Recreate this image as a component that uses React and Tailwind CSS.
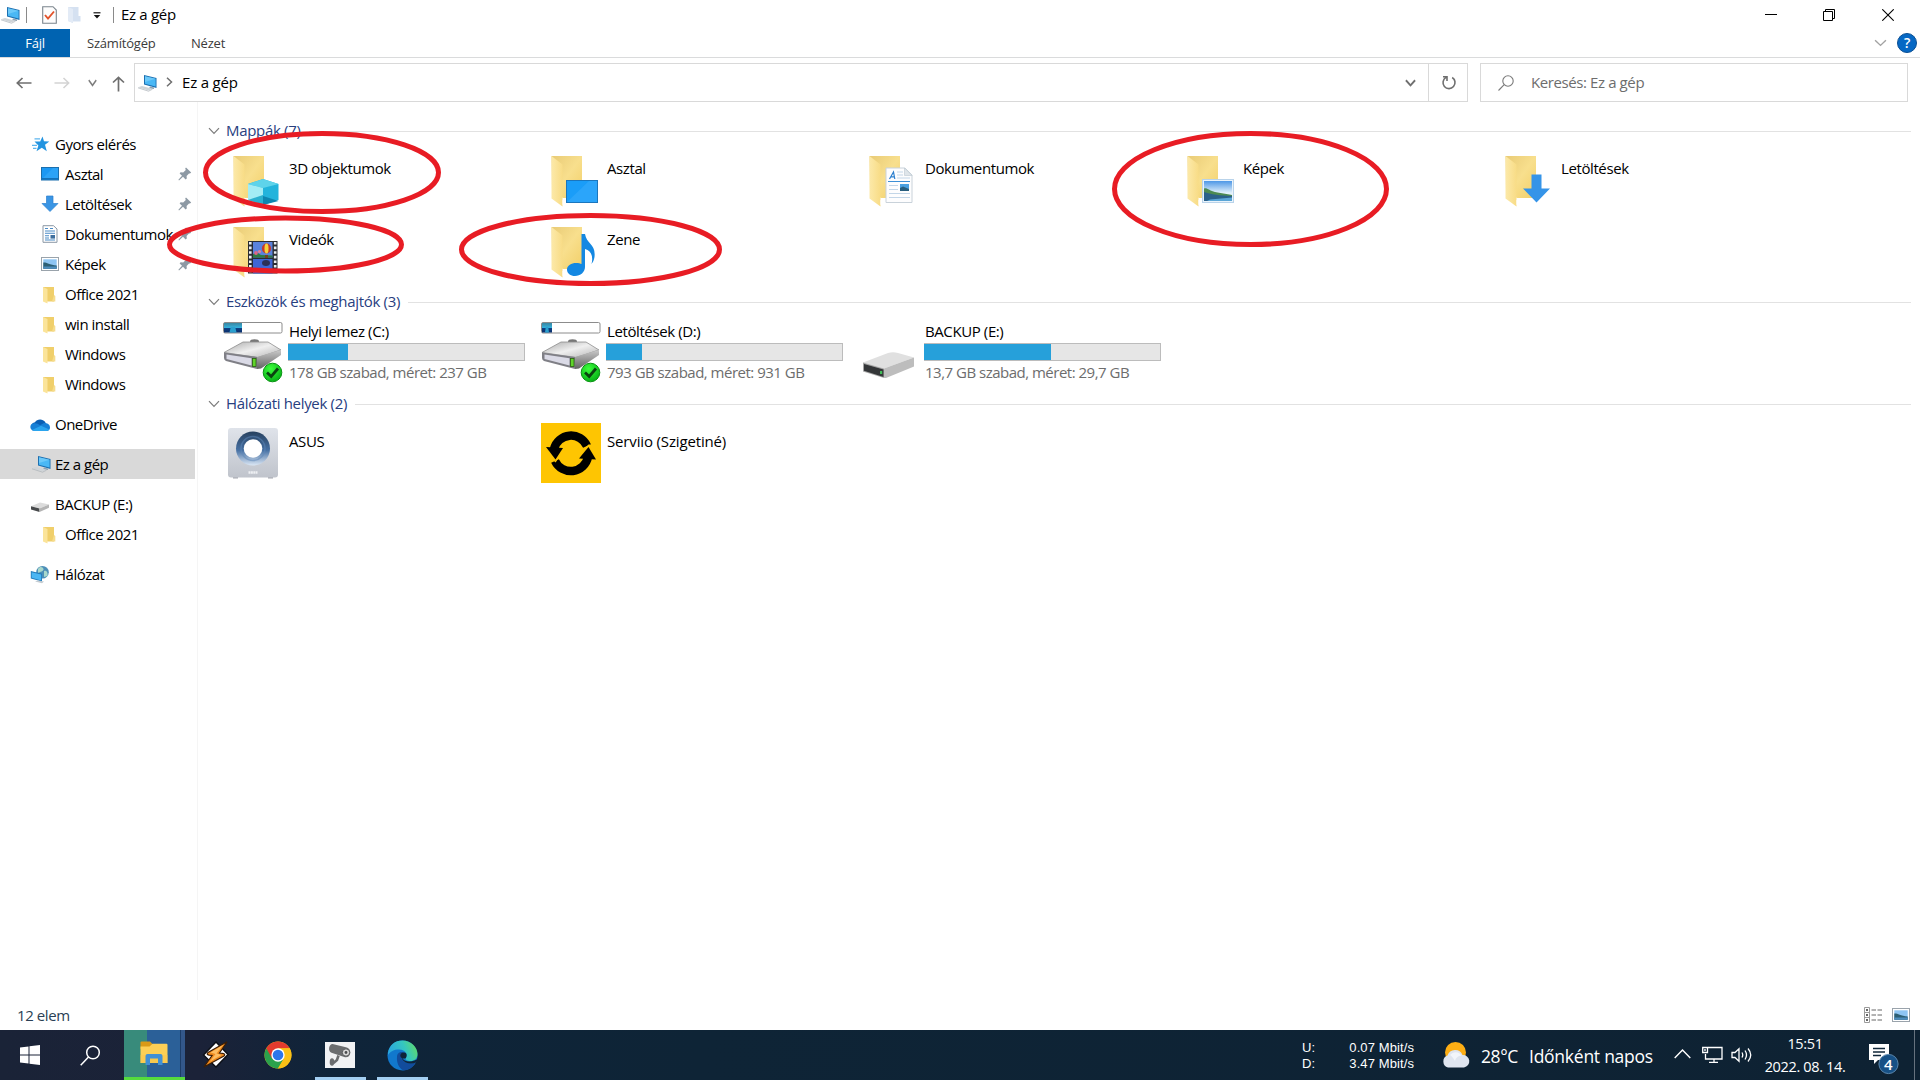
import React from "react";

/* ---------- small icons ---------- */

const Computer = ({ className = "" }) => (
  <svg width="22" height="20" viewBox="0 0 22 20" className={`shrink-0 ${className}`}>
    <path d="M8 2 L20.5 5 V15 L8 11.5 Z" fill="#1c6fb0" />
    <path d="M9 3.2 L19.6 5.8 V13.6 L9 10.8 Z" fill="#4ab8f5" />
    <path d="M9 3.2 L19.6 5.8 L9 9 Z" fill="#7bd0fb" opacity=".7" />
    <path d="M14 13.5 L18 14.6 V16 L13 15.4 Z" fill="#8fa3b3" />
    <path d="M2 14.2 L6 13 L16.5 15.8 L12.5 17.6 Z" fill="#cfd4d8" />
    <path d="M2 14.8 L12.5 18.2 L16.5 16.2" stroke="#aab2b8" strokeWidth=".7" fill="none" />
  </svg>
);

const MiniFolder = () => (
  <svg width="14" height="18" viewBox="0 0 14 18" className="shrink-0">
    <path d="M1 1 H12 V15.5 H6 L1 15 Z" fill="#f0cf6b" />
    <path d="M1 1 L5.5 3 V17.5 L1 15.5 Z" fill="#fbe49a" />
    <path d="M12 9 L13.3 10 V15.5 H10 Z" fill="#f6dc8c" />
  </svg>
);

const Star = () => (
  <svg width="18" height="16" viewBox="0 0 18 16" className="shrink-0">
    <path d="M10.500 .5 L12 5.200 L17.300 5.400 L13 8.800 L14.800 15.300 L9.800 11.800 L4.500 15.300 L6.400 9.400 L2.500 5.600 L8.200 5.400 Z" fill="#2394e0" />
    <path d="M2.500 2.800 H8 M0 9.400 H5 M1 12.300 H4.500" stroke="#5db5ee" strokeWidth="1.200" />
  </svg>
);

const MiniDesktop = () => (
  <svg width="18" height="14" viewBox="0 0 18 14" className="shrink-0">
    <rect x=".5" y=".5" width="17" height="12.5" fill="#1b98f3" stroke="#1a6fae" />
    <path d="M1 12 L12 1 H17 V12 Z" fill="#3badfa" opacity=".55" />
    <rect x="1" y="11" width="16" height="1.6" fill="#1471b8" />
  </svg>
);

const MiniDown = () => (
  <svg width="18" height="18" viewBox="0 0 18 18" className="shrink-0">
    <path d="M5.5 1 H12 V8.5 H17 L9 16.5 L1 8.5 H5.5 Z" fill="#3a95e4" stroke="#2b7fce" strokeWidth=".7" />
  </svg>
);

const MiniDoc = () => (
  <svg width="16" height="18" viewBox="0 0 16 18" className="shrink-0">
    <path d="M1 .7 H11.5 L15 4 V17.3 H1 Z" fill="#fff" stroke="#8b98a5" />
    <path d="M3 3.5 H6 M8 3.5 H11 M3 6 H13 M3 8.3 H13 M3 10.8 H7 M3 13 H7 M3 15 H13" stroke="#4a8bc6" strokeWidth="1.1" />
    <rect x="8.5" y="10" width="4.5" height="3.6" fill="#3e6f9e" />
  </svg>
);

const MiniPicture = () => (
  <svg width="18" height="14" viewBox="0 0 18 14" className="shrink-0">
    <rect x=".5" y=".5" width="17" height="13" fill="#fff" stroke="#9aa3ab" />
    <rect x="2.3" y="2.3" width="13.4" height="9.4" fill="#8ec5f3" />
    <path d="M2.3 5.5 C5 5 8 7.5 15.7 8.6 V11.7 H2.3 Z" fill="#2d5f74" />
    <path d="M2.3 9.5 H15.7 V11.7 H2.3 Z" fill="#4d8dbd" />
  </svg>
);

const Cloud = () => (
  <svg width="20" height="13" viewBox="0 0 20 13" className="shrink-0">
    <path d="M1 7.500 C2 5 4 4.500 5 4.300 A6 5.500 0 0 1 15.200 4 L16 6 L10 9 Z" fill="#0a5fb4" />
    <path d="M4.500 12.900 A4 4 0 0 1 1 6.800 C4 4.300 7.500 5.200 10 7.200 L14 5.100 C18 4.400 20 7 20 9.400 A3.400 3.400 0 0 1 16.600 12.900 Z" fill="#1780d6" />
    <path d="M2 12 L11 7.800 L19.300 11.500 A3.400 3.400 0 0 1 16.600 12.900 H4.500 Z" fill="#2ba5ee" />
  </svg>
);

const MiniDrive = () => (
  <svg width="20" height="12" viewBox="0 0 20 12" className="shrink-0">
    <path d="M1 5.2 L10 1.6 L19 3.6 L9.5 7.6 Z" fill="#dcdcdc" />
    <path d="M1 5.2 L9.5 7.6 V11 L1 8.6 Z" fill="#484a4c" />
    <path d="M9.5 7.6 L19 3.6 V6.8 L9.5 11 Z" fill="#b4b4b4" />
  </svg>
);

const MiniNetwork = () => (
  <svg width="20" height="19" viewBox="0 0 20 19" className="shrink-0">
    <circle cx="12.5" cy="7.2" r="6.300" fill="#4d8fb8" />
    <path d="M8 4 C10 1 13 2 13.5 4 S10 7 8 8 Z M14 6 C17 5 18 8 17.5 11 L14 12 Z" fill="#a9d8cb" />
    <path d="M.8 6 L12 8.8 V16.6 L.8 13.4 Z" fill="#1f78b8" />
    <path d="M1.600 7.200 L11.200 9.600 V15.400 L1.600 12.800 Z" fill="#4bb6f3" />
    <path d="M5 16.600 L12 18.300 L14 16.500 L8 15.600 Z" fill="#c3cbd1" />
  </svg>
);

const Pin = () => (
  <svg width="14" height="14" viewBox="0 0 14 14" className="shrink-0">
    <path d="M8 .6 L13.2 5.6 L12 6.6 L11 6.4 L8.6 9 L8.8 11.6 L7.6 12.4 L5 9.8 L1 13.4 L.4 12.8 L4 8.8 L1.6 6.4 L2.6 5.2 L5.2 5.4 L7.8 3 L7.2 1.6 Z" fill="#8d99a4" />
  </svg>
);

const Chevron = ({ w = 12, color = "#6b6b6b", sw = 1.4, className = "" }) => (
  <svg width={w} height="8" viewBox="0 0 12 8" preserveAspectRatio="none" className={`shrink-0 ${className}`}>
    <path d="M1 1.2 L6 6.4 L11 1.2" fill="none" stroke={color} strokeWidth={sw} />
  </svg>
);

/* ---------- large folder icons ---------- */

const Folder = ({ children }) => (
  <svg width="60" height="60" viewBox="0 0 60 60" className="shrink-0">
    <defs>
      <linearGradient id="fb" x1="0" x2="1" y1="0" y2="1">
        <stop offset="0" stopColor="#e9cb76" />
        <stop offset=".5" stopColor="#f8df8d" />
        <stop offset="1" stopColor="#f2cf68" />
      </linearGradient>
      <linearGradient id="ff" x1="0" x2="1">
        <stop offset="0" stopColor="#fce9a9" />
        <stop offset="1" stopColor="#f8dc86" />
      </linearGradient>
    </defs>
    <path d="M10.500 5 H41 V47 H22 L11 40 Z" fill="url(#fb)" />
    <path d="M10.500 5 L21.500 13.500 V55.500 L10.500 47.500 Z" fill="url(#ff)" />
    <path d="M21.500 49 L24 47.500 V52 L21.500 54 Z" fill="#fff" />
    {children}
  </svg>
);

const Cube = () => (
  <g>
    <path d="M25 33 L40 28 L55.5 33 V49 L40 54 L25 49 Z" fill="#22b4dc" />
    <path d="M25 33 L40 28 L55.5 33 L40 37 Z" fill="#5ed3ea" />
    <path d="M25 33 L40 37 V53 L25 49 Z" fill="#a3ecf4" />
    <path d="M25 49 L40 44 V53.5 Z" fill="#2bb0cf" />
    <path d="M40 45 L55.5 50 L40 54 Z" fill="#0d86b0" />
  </g>
);
const Screen = () => (
  <g>
    <rect x="25.5" y="29.5" width="31" height="22" fill="#1a9df8" stroke="#1b76bd" />
    <path d="M26 51 L48 30 H56 V51 Z" fill="#3caefb" opacity=".5" />
  </g>
);
const Sheet = () => (
  <g>
    <path d="M27 17 H46 L53 24 V51.5 H27 Z" fill="#fdfdfe" stroke="#c9d2da" />
    <path d="M45.5 17 V24.5 H53 Z" fill="#dfe5ea" stroke="#bcc7d0" strokeWidth=".6" />
    <path d="M29 30.5 H51" stroke="#3c8fd6" strokeWidth="1" />
    <path d="M30.5 28 L34.5 21 L35.8 28 M32 25.8 H35.6" stroke="#2b7fce" strokeWidth="1.2" fill="none" />
    <path d="M38 21 H44 M38 24 H44 M38 27 H51 M30 34.5 H39 M30 38.5 H39 M30 42.5 H51 M30 46.5 H51" stroke="#c3d6e8" />
    <rect x="41" y="33" width="9" height="7" fill="#4aa0e0" />
    <path d="M41 37 L44 35.5 L50 38 V40 H41 Z" fill="#285e7e" />
  </g>
);
const Photo = () => (
  <g>
    <defs>
      <linearGradient id="sky" x1="0" x2="0" y1="0" y2="1">
        <stop offset="0" stopColor="#4e97e6" />
        <stop offset=".6" stopColor="#e3f1fb" />
      </linearGradient>
    </defs>
    <rect x="25.500" y="28.500" width="31" height="23" fill="#e9f3fb" stroke="#b9d3ea" />
    <rect x="27" y="30" width="28" height="20" fill="url(#sky)" />
    <path d="M27 37.500 C30 36.500 33 40 38 41 S50 43 55 44 V46 H27 Z" fill="#4c8a52" />
    <path d="M27 41 C33 43.500 44 44.500 55 45 V50 H27 Z" fill="#2b618a" />
    <path d="M33 48.500 L55 46.500 V50 H30 Z" fill="#5aa5d6" />
  </g>
);
const Down = () => (
  <path d="M36.500 23.500 H46.500 V37.500 H55 L41.500 51.500 L28 37.500 H36.500 Z" fill="#3594e8" />
);
const Film = () => (
  <g>
    <rect x="25" y="19" width="29.500" height="32.500" fill="#2a2c33" />
    <rect x="30" y="20" width="19.500" height="15.500" fill="#5a82dc" />
    <rect x="30" y="37" width="19.500" height="14.500" fill="#3f66d6" />
    <path d="M30 32 L34 30.500 L38 33 L49.500 33.500 V35.500 H30 Z" fill="#2d7a43" />
    <circle cx="33" cy="31" r="1.900" fill="#dc6688" />
    <circle cx="36.500" cy="29.500" r="1.600" fill="#e27f96" />
    <ellipse cx="43.500" cy="26.500" rx="4.600" ry="5" fill="#c73a2b" />
    <ellipse cx="43.500" cy="26.500" rx="2" ry="5" fill="#f7d33b" />
    <path d="M42 33 H45 V36 H42 Z" fill="#71401f" />
    <ellipse cx="43" cy="41" rx="4" ry="3" fill="#2c3056" />
    <path d="M27.300 20 V51 M52.200 20 V51" stroke="#eceff2" strokeWidth="2.600" strokeDasharray="2.600 2" />
  </g>
);
const Note = () => (
  <path d="M40.500 12 L44 12 C45.500 22 55 22 53.500 35 C53 38 52 40 50.500 42 C52.500 34 50 28.500 44 27 V45 C44 50 39.500 54 34 54 C29.500 54 26 51.500 26 47.500 C26 43.500 30.500 41 35 41 C37.500 41 39.500 41.500 40.500 42 Z" fill="#1488e2" />
);

/* ---------- drive and device icons ---------- */

const HardDrive = ({ used }) => (
  <svg width="60" height="62" viewBox="0 0 60 62" className="shrink-0">
    <defs>
      <linearGradient id="ht" x1="0" x2="1" y1="0" y2="1">
        <stop offset="0" stopColor="#a9a9a9" />
        <stop offset=".5" stopColor="#efefef" />
        <stop offset="1" stopColor="#b4b4b4" />
      </linearGradient>
      <linearGradient id="hs" x1="0" x2="0" y1="0" y2="1">
        <stop offset="0" stopColor="#c9c9c9" />
        <stop offset="1" stopColor="#636363" />
      </linearGradient>
      <linearGradient id="hu" x1="0" x2="0" y1="0" y2="1">
        <stop offset="0" stopColor="#3a86a0" />
        <stop offset=".5" stopColor="#35b2de" />
        <stop offset=".58" stopColor="#0c3e80" />
        <stop offset="1" stopColor="#0b2f6c" />
      </linearGradient>
      <radialGradient id="hg" cx=".4" cy=".3" r=".8">
        <stop offset="0" stopColor="#3cff3c" />
        <stop offset="1" stopColor="#00a812" />
      </radialGradient>
    </defs>
    <rect x=".5" y="1.500" width="58.500" height="10.500" rx="1.500" fill="#fff" stroke="#8c8c8c" />
    <rect x="1" y="2" width={used} height="9.500" fill="url(#hu)" />
    <path d={`M${1 + used * 0.3} 11.500 L${1 + used * 0.38} 6 H${1 + used * 0.62} L${1 + used * 0.7} 11.500 Z`} fill="#2a9fce" />
    <ellipse cx="31.500" cy="20.500" rx="4.500" ry="2.300" fill="#777" />
    <path d="M1 31.500 L20 21 H45 L58 29 L35 36.500 Z" fill="url(#ht)" stroke="#8d8d8d" strokeWidth=".8" />
    <path d="M1 31.500 L34 36 V48 L3 40 Q1 39 1 37 Z" fill="#7f7f86" />
    <path d="M3.500 33.500 L28.500 37.200 V44.500 L3.500 38 Z" fill="#dadae6" />
    <path d="M34 36 L58 29 V34 L38 47.500 L34 48 Z" fill="url(#hs)" />
    <rect x="29.500" y="37.500" width="3.500" height="8" fill="#5fd42a" stroke="#2a6110" strokeWidth=".8" />
    <circle cx="49.500" cy="51.500" r="9.300" fill="url(#hg)" stroke="#06930f" strokeWidth="1" />
    <path d="M44 51.500 L48.200 55.500 L55 47.500" fill="none" stroke="#0a4310" strokeWidth="2.800" />
  </svg>
);

const Removable = () => (
  <svg width="60" height="60" viewBox="1 0 60 60" className="shrink-0">
    <path d="M5 41.500 L30 32 Q35 30.500 40 32 L56 36.500 L26 47.500 Z" fill="#e0e0e0" />
    <path d="M5 41.500 L26 47.500 V57 L5 50.500 Z" fill="#a6a6a6" />
    <path d="M6 43 L25.500 48.600 V56 L6 49.800 Z" fill="#343638" />
    <path d="M26 47.500 L56 36.500 V45.500 L28 57 H26 Z" fill="#bdbdbd" />
    <rect x="22" y="50" width="2.200" height="3" fill="#42bd58" />
  </svg>
);

const Camera = () => (
  <svg width="60" height="60" viewBox="0 0 60 60" className="shrink-0">
    <defs>
      <linearGradient id="cb" x1="0" x2="0" y1="0" y2="1">
        <stop offset="0" stopColor="#dfe3ea" />
        <stop offset="1" stopColor="#c0c4cc" />
      </linearGradient>
      <linearGradient id="cr" x1="0" x2="0" y1="0" y2="1">
        <stop offset="0" stopColor="#27415f" />
        <stop offset=".55" stopColor="#4670a3" />
        <stop offset="1" stopColor="#dbe7f5" />
      </linearGradient>
    </defs>
    <rect x="10" y="53" width="5" height="2.500" fill="#a5a8af" />
    <rect x="45" y="53" width="5" height="2.500" fill="#a5a8af" />
    <rect x="5" y="5" width="50" height="49.500" rx="3" fill="url(#cb)" />
    <circle cx="30" cy="25.500" r="17" fill="url(#cr)" />
    <circle cx="30" cy="25.500" r="12" fill="none" stroke="#5d88ba" strokeWidth="1.500" opacity=".5" />
    <circle cx="30" cy="25.500" r="9.300" fill="#fff" />
    <path d="M25.500 49.500 H34.500" stroke="#eef0f3" strokeWidth="2.500" strokeDasharray="2 .4" />
  </svg>
);

const Serviio = () => (
  <svg width="60" height="60" viewBox="0 0 60 60" className="shrink-0">
    <rect width="60" height="60" fill="#fec502" />
    <path d="M13 26 A17.500 17.500 0 0 1 46 23" fill="none" stroke="#000" strokeWidth="8.500" />
    <path d="M47 34 A17.500 17.500 0 0 1 14 38" fill="none" stroke="#000" strokeWidth="8.500" />
    <path d="M5 24 L22 25 L14.500 36.500 Z" fill="#000" />
    <path d="M55 36.500 L38 35.500 L47.500 24 Z" fill="#000" />
    <path d="M8.500 33 L14.500 38.500 L19 32 M41.500 28 L48 22 L51.500 28" fill="none" stroke="#fec502" strokeWidth="1.300" />
  </svg>
);

/* ---------- explorer pieces ---------- */

const NavRow = ({ icon, label, nested, pin, selected }) => (
  <div className={`flex h-[30px] w-[195px] items-center ${nested ? "pl-[41px]" : "pl-[30px]"} ${selected ? "bg-[#d9d9d9]" : ""}`}>
    <span className={`flex shrink-0 items-center ${nested ? "w-[24px]" : "w-[25px]"}`}>{icon}</span>
    <span className="w-[113px] whitespace-nowrap tracking-[-0.500px]">{label}</span>
    {pin && <Pin />}
  </div>
);

const NestedFolder = ({ label }) => (
  <NavRow nested icon={<span className="pl-px pt-px"><MiniFolder /></span>} label={label} />
);

const Section = ({ title, children, className = "" }) => (
  <section className={className}>
    <div className="flex h-[22px] items-center pr-[9px] text-[#28407f]">
      <Chevron w={12} color="#7b7b7b" sw={1.2} className="mr-[6px]" />
      <h2 className="-mt-[2px] whitespace-nowrap tracking-[-0.320px]">{title}</h2>
      <span className="ml-2 mt-px h-px flex-1 bg-[#e2e2e2]" />
    </div>
    {children}
  </section>
);

const Tile = ({ icon, label, labelClass = "mt-[7px]" }) => (
  <div className="flex h-[71px] w-[318px]">
    {icon}
    <span className={`ml-[6px] whitespace-nowrap ${labelClass}`}>{label}</span>
  </div>
);

const Drive = ({ icon, name, info, percent }) => (
  <div className="flex w-[318px]">
    {icon}
    <div className="ml-[5px] flex w-[237px] flex-col">
      <span className="h-[22px] pl-px leading-[20px]">{name}</span>
      <div className="h-[18px] border border-[#bcbcbc] bg-[#e6e6e6]">
        <div className="-ml-px h-full bg-[#26a0da]" style={{ width: `${percent}%` }} />
      </div>
      <span className="mt-px whitespace-nowrap pl-px leading-[20px] tracking-[-0.500px] text-[#6d6d6d]">{info}</span>
    </div>
  </div>
);

const folders = [
  ["3D objektumok", <Cube />],
  ["Asztal", <Screen />],
  ["Dokumentumok", <Sheet />],
  ["Képek", <Photo />],
  ["Letöltések", <Down />],
  ["Videók", <Film />],
  ["Zene", <Note />],
];

/* Hand-drawn red markers lying over the window */
const Markers = () => (
  <svg width="1920" height="300" className="pointer-events-none absolute left-0 top-0" fill="none" stroke="#e81c24" strokeWidth="5">
    <ellipse cx="322" cy="172.500" rx="116.500" ry="39" />
    <ellipse cx="285.500" cy="244.500" rx="116" ry="26.500" />
    <ellipse cx="590.500" cy="249.500" rx="129" ry="34" />
    <ellipse cx="1250.500" cy="189" rx="136" ry="55.500" />
  </svg>
);

/* ---------- taskbar ---------- */

const Taskbar = () => (
  <footer className="flex h-[50px] shrink-0 bg-[linear-gradient(90deg,#1a2337_0px,#1b2238_200px,#0f2439_330px,#0e2436_700px,#0e2233_1920px)] text-white">
    <div className="flex w-[60px] items-center justify-center">
      <svg width="20" height="20" viewBox="0 0 20 20" fill="#fff">
        <path d="M0 2.600 L8.500 1.400 V9.500 H0 Z M9.500 1.200 L20 0 V9.500 H9.500 Z M0 10.500 H8.500 V18.600 L0 17.400 Z M9.500 10.500 H20 V20 L9.500 18.800 Z" />
      </svg>
    </div>
    <div className="flex w-[64px] items-center pl-5">
      <svg width="21" height="21" viewBox="0 0 21 21" fill="none" stroke="#fff" strokeWidth="1.500">
        <circle cx="13" cy="7.500" r="6.300" />
        <path d="M8.500 12 L.7 20.300" />
      </svg>
    </div>
    <div className="flex h-[50px] w-[61px] items-center justify-center border-b-[3px] border-[#55dc3d] bg-[linear-gradient(90deg,#388b7b_23px,#2b6098_23px,#2b6098_56px,#1c3d68_56px,#1c3d68_57px,#33578a_57px)]">
      <svg width="28" height="25" viewBox="0 0 28 25" className="-ml-px">
        <path d="M.5 1.500 Q.5 .5 1.500 .5 H10 L13 3.500 V8 H.5 Z" fill="#d99a17" />
        <path d="M.5 5.500 H9.500 L12.500 2.800 H26.500 Q27.500 2.800 27.500 4 V22 H.5 Z" fill="#fccf56" />
        <path d="M.5 14 H27.500 V22 H.5 Z" fill="#fbc64c" opacity=".6" />
        <path d="M5.500 24 V15 Q5.500 13 7.500 13 H20.500 Q22.500 13 22.500 15 V24 H18 V18 H10 V24 Z" fill="#4190d6" />
        <path d="M10 17.500 H18 V22 H10 Z" fill="#f7c84f" />
      </svg>
    </div>
    <div className="flex w-[62px] items-center justify-center">
      <svg width="27" height="27" viewBox="0 0 27 27" className="-ml-[2px] -mt-px">
        <path d="M14 1 L26 13.500 L14 26 L1.500 14 Z" fill="#fff" stroke="#0b0e15" strokeWidth="1.400" />
        <path d="M25 .8 L6 11.500 Q4 13.500 7 14.200 L10 14.500 L2 26 L22 15 Q24 13 20.500 12.300 L17.500 12 Z" fill="#f08b1f" stroke="#3b1d05" strokeWidth="1.200" />
        <path d="M21 4 L8.500 11.500 L13.500 13 L8 20.500 L19.500 13.900 L14.500 12.500 Z" fill="#fdbd62" />
      </svg>
    </div>
    <div className="flex w-[62px] items-center justify-center">
      <svg width="28" height="28" viewBox="0 0 28 28">
        <circle cx="14" cy="14" r="13.500" fill="#fbc116" />
        <path d="M14 14 L2.310 7.250 A13.500 13.500 0 0 0 14 27.500 L20 17.500 Z" fill="#2ba24c" />
        <path d="M2.310 7.250 A13.500 13.500 0 0 1 25.690 7.250 H14 L8 17.500 Z" fill="#e33b2e" />
        <path d="M25.690 7.250 A13.500 13.500 0 0 1 14 27.500 L19.800 17.400 L14 7.500 Z" fill="#fbc116" />
        <circle cx="14" cy="14" r="6.700" fill="#fff" />
        <circle cx="14" cy="14" r="5.300" fill="#2c76ea" />
      </svg>
    </div>
    <div className="flex w-[62px] justify-center">
      <div className="flex h-[50px] w-[51px] items-center justify-center border-b-[3px] border-[#a3cff2] pt-[3px]">
        <svg width="30" height="26" viewBox="0 0 30 26">
          <rect width="30" height="26" fill="#f1f2f4" />
          <path d="M7.500 2 L21 5.200 Q25.500 6.500 25.300 11 Q24.500 15.700 20 15.200 L6.500 10.700 Q3.500 9.500 4.200 5.500 Q5 2 7.500 2 Z" fill="#6b6d6f" />
          <circle cx="21" cy="10.500" r="3.700" fill="#d8d8d8" stroke="#55575a" />
          <circle cx="21" cy="10.500" r="1.400" fill="#4a4c4e" />
          <path d="M13.500 13.500 L12 18 L8.500 21" stroke="#6b6d6f" strokeWidth="2.600" fill="none" />
          <ellipse cx="7" cy="20" rx="2.300" ry="3.800" fill="#6b6d6f" />
        </svg>
      </div>
    </div>
    <div className="flex w-[62px] justify-center">
      <div className="flex h-[50px] w-[51px] items-center justify-center border-b-[3px] border-[#a3cff2] pt-[3px]">
        <svg width="31" height="31" viewBox="0 0 31 31">
          <defs>
            <linearGradient id="e1" x1="0" x2="1" y1=".3" y2="0">
              <stop offset="0" stopColor="#2ba9dd" />
              <stop offset=".5" stopColor="#35c6c0" />
              <stop offset="1" stopColor="#69de57" />
            </linearGradient>
          </defs>
          <circle cx="15.500" cy="15.500" r="15" fill="#1178cd" />
          <path d="M1 13 C2 5 8 .5 15.500 .5 C24 .5 30.500 7 30.500 14 C30.500 19 27 21 23.500 21 C20 21 18 19.500 18.500 18 C21 15.500 19 9.500 12 9.500 C7 9.500 3 11.500 1 15 Z" fill="url(#e1)" />
          <path d="M10 17 C10 12.500 14 11 17 12.500 C14 13.500 14 19 17 21.500 C20 24 26 23.500 28.500 22.500 C26 27.500 21 30.500 16.500 30.500 C11.500 28 9.500 22 10 17 Z" fill="#124c9c" />
          <path d="M18.500 18.500 C15 19 12.500 17 13.500 14.500 C14.500 12 18.500 12 19.500 14 C20 15.500 19.500 17 18.500 18.500 Z" fill="#0f2439" />
          <path d="M15 17.500 C16.500 21 22 23 27.500 20.500 L31 19 L29 22.500 C24 24.500 17.500 23.500 15 19 Z" fill="#0f2439" />
        </svg>
      </div>
    </div>

    <div className="ml-auto flex w-[618px]">
      <div className="grid w-[112px] grid-cols-[1fr_auto] content-center gap-x-2 pt-px font-['Liberation_Sans'] text-[13px] leading-[16px] tracking-[0.100px]">
        <span>U:</span>
        <span className="text-right">0.07 Mbit/s</span>
        <span>D:</span>
        <span className="text-right">3.47 Mbit/s</span>
      </div>
      <svg width="30" height="28" viewBox="0 0 30 28" className="ml-[27px] mt-[10px] shrink-0">
        <circle cx="14.500" cy="12.500" r="10.500" fill="#fdae14" />
        <path d="M7 27.500 A6.300 6.300 0 0 1 6.500 15.500 A8 8 0 0 1 21.500 15 A6.300 6.300 0 0 1 23 27.500 Z" fill="#dfe5ef" />
        <path d="M9 15 A7 7 0 0 1 20.500 15.500 Q15 16 14 21 Q11 16 9 15 Z" fill="#f2f5fa" />
      </svg>
      <span className="ml-[10px] mt-px w-[48px] text-[17.500px] leading-[51px] tracking-[-0.400px]">28°C</span>
      <span className="mt-px w-[145px] whitespace-nowrap text-[17.500px] leading-[51px] tracking-[-0.250px]">Időnként napos</span>
      <svg width="17" height="10" viewBox="0 0 17 10" className="mt-[19px] shrink-0" fill="none" stroke="#fff" strokeWidth="1.400">
        <path d="M.7 9 L8.500 1 L16.300 9" />
      </svg>
      <svg width="21" height="18" viewBox="0 0 21 18" className="ml-[11px] mt-[16px] shrink-0" fill="none" stroke="#fff" strokeWidth="1.300">
        <path d="M6 1.500 H20 V13 H3.500 V8 M12 13 V16.300 M7 16.300 H16" />
        <path d="M.7 1.500 H5.500 V6.500 H.7 Z M3 3 V5" />
      </svg>
      <svg width="22" height="18" viewBox="0 0 22 18" className="ml-[8px] mt-[16px] shrink-0" fill="none" stroke="#fff" strokeWidth="1.300">
        <path d="M1 6.500 H4 L8 2.800 V15.200 L4 11.500 H1 Z M11 6.500 Q12.500 9 11 11.500 M14 4.500 Q17 9 14 13.500 M17 2.500 Q22.500 9 17 15.500" />
      </svg>
      <div className="ml-[6px] flex w-[92px] flex-col items-center pt-[2px] text-[14.500px] leading-[23px] tracking-[-0.350px]">
        <span>15:51</span>
        <span className="whitespace-nowrap">2022. 08. 14.</span>
      </div>
      <div className="relative ml-[17px] w-[32px] shrink-0">
        <svg width="32" height="34" viewBox="0 0 32 34" className="mt-[12px]">
          <path d="M1 2 H21 V18 H10 L6 22 V18 H1 Z" fill="#fff" />
          <path d="M5 6.500 H17 M5 10 H17 M5 13.500 H13" stroke="#10273a" strokeWidth="1.400" />
          <circle cx="20.500" cy="22" r="9.600" fill="#175186" stroke="#5b87ad" />
        </svg>
        <span className="absolute left-[16px] top-[25px] text-[15px] font-semibold leading-[19px]">4</span>
      </div>
      <div className="ml-auto w-[6px] border-l border-[#66727e]" />
    </div>
  </footer>
);

export default function App() {
  return (
    <div className="relative flex h-[1080px] w-[1920px] flex-col overflow-hidden bg-white font-['Open_Sans','Noto_Sans',sans-serif] text-[15px] leading-[20px] tracking-[-0.400px] text-black">
      {/* title bar */}
      <header className="flex h-[29px] shrink-0 items-center">
        <Computer className="-ml-px" />
        <span className="ml-[5px] h-4 w-px bg-[#8a8a8a]" />
        <svg width="15" height="18" viewBox="0 0 15 18" className="ml-[15px]">
          <path d="M.7 .7 H11 L14.300 4 V17.300 H.7 Z" fill="#fdfdfd" stroke="#7b858d" strokeWidth="1.100" />
          <path d="M3 9 L6 12.500 L12 5.500" fill="none" stroke="#e2532b" strokeWidth="1.900" />
        </svg>
        <svg width="13" height="16" viewBox="0 0 13 16" className="ml-[11px]">
          <path d="M0 0 H10.500 V9 H12.500 V14.500 H5 V16 L0 14 Z" fill="#d5e1f1" />
          <path d="M0 0 L5 2 V16 L0 14 Z" fill="#e3ebf6" />
        </svg>
        <svg width="8" height="7" viewBox="0 0 8 7" className="ml-[12px] mt-[2px]">
          <path d="M.5 .8 H7.500" stroke="#111" strokeWidth="1.200" />
          <path d="M.8 3 H7.200 L4 6.500 Z" fill="#111" />
        </svg>
        <span className="ml-[12px] h-4 w-px bg-[#8a8a8a]" />
        <h1 className="-mt-[2px] ml-[7px] tracking-[-0.300px]">Ez a gép</h1>
        <div className="ml-auto flex items-center pr-[26px]">
          <svg width="12" height="12" viewBox="0 0 12 12"><path d="M0 5.500 H12" stroke="#000" /></svg>
          <svg width="12" height="12" viewBox="0 0 12 12" className="ml-[46px]" fill="none" stroke="#000">
            <path d="M.5 2.500 H9.500 V11.500 H.5 Z M2.500 2.500 V.5 H11.500 V9.500 H9.500" />
          </svg>
          <svg width="12" height="12" viewBox="0 0 12 12" className="ml-[47px]" stroke="#000" strokeWidth="1.100">
            <path d="M.3 .3 L11.700 11.700 M11.700 .3 L.3 11.700" />
          </svg>
        </div>
      </header>

      {/* ribbon tabs */}
      <nav className="flex h-[29px] shrink-0 items-center border-b border-[#dadbdc] text-[13px] tracking-[-0.200px] text-[#3b3b3b]">
        <span className="flex h-[28px] w-[70px] items-center justify-center bg-[#0063b1] text-white">Fájl</span>
        <span className="ml-[17px] w-[104px]">Számítógép</span>
        <span>Nézet</span>
        <Chevron w={13} color="#a3a3a3" sw={1.300} className="ml-auto" />
        <span className="ml-[10px] mr-[3px] flex size-[20px] items-center justify-center rounded-full border border-[#0a4f94] bg-[#0668c4] text-[14px] font-semibold text-white">?</span>
      </nav>

      {/* address bar */}
      <div className="mt-[5px] flex h-[39px] shrink-0 items-center">
        <svg width="16" height="12" viewBox="0 0 16 12" className="ml-[16px]" fill="none" stroke="#6f6f6f" strokeWidth="1.700">
          <path d="M6.500 1 L1.300 6 L6.500 11 M1.300 6 H15.500" />
        </svg>
        <svg width="16" height="12" viewBox="0 0 16 12" className="ml-[22px]" fill="none" stroke="#d3d3d3" strokeWidth="1.500">
          <path d="M9.500 1 L14.700 6 L9.500 11 M14.700 6 H.5" />
        </svg>
        <Chevron w={9} color="#7d7d7d" sw={1.900} className="ml-[18px]" />
        <svg width="13" height="16" viewBox="0 0 13 16" className="ml-[15px] mt-[2px]" fill="none" stroke="#6f6f6f" strokeWidth="1.700">
          <path d="M1 6.500 L6.500 1.300 L12 6.500 M6.500 1.300 V15.500" />
        </svg>
        <div className="ml-[9px] flex h-[39px] w-[1334px] items-center border border-[#d9d9d9]">
          <Computer className="ml-px" />
          <svg width="7" height="10" viewBox="0 0 7 10" className="-mt-[2px] ml-[8px]" fill="none" stroke="#6f6f6f" strokeWidth="1.500">
            <path d="M1 .8 L5.500 5 L1 9.200" />
          </svg>
          <span className="-mt-[2px] ml-[9px] tracking-[-0.200px]">Ez a gép</span>
          <Chevron w={11} color="#6f6f6f" sw={2} className="ml-auto" />
          <span className="ml-[12px] flex h-full w-[39px] items-center justify-center border-l border-[#d9d9d9] pl-px">
            <svg width="16" height="16" viewBox="0 0 16 16" fill="none" stroke="#6f6f6f" strokeWidth="1.600">
              <path d="M11.200 2.500 A6 6 0 1 1 5 2.400 M2 1.700 H6 V6" />
            </svg>
          </span>
        </div>
        <div className="ml-[12px] flex h-[39px] w-[428px] items-center border border-[#d9d9d9]">
          <svg width="16" height="16" viewBox="0 0 16 16" className="ml-[17px]" fill="none" stroke="#7a7a7a" strokeWidth="1.100">
            <circle cx="10" cy="6" r="5.200" />
            <path d="M6.200 9.700 L.5 15.500" />
          </svg>
          <span className="-mt-[2px] ml-[17px] text-[#6d6d6d]">Keresés: Ez a gép</span>
        </div>
      </div>

      {/* body */}
      <div className="flex min-h-0 flex-1">
        <aside className="flex w-[198px] shrink-0 flex-col gap-[10px] border-r border-[#f5f5f5] pt-[27px]">
          <div>
            <NavRow icon={<span className="pl-[2px]"><Star /></span>} label="Gyors elérés" />
            <NavRow nested pin icon={<MiniDesktop />} label="Asztal" />
            <NavRow nested pin icon={<MiniDown />} label="Letöltések" />
            <NavRow nested pin icon={<span className="pl-px"><MiniDoc /></span>} label="Dokumentumok" />
            <NavRow nested pin icon={<MiniPicture />} label="Képek" />
            <NestedFolder label="Office 2021" />
            <NestedFolder label="win install" />
            <NestedFolder label="Windows" />
            <NestedFolder label="Windows" />
          </div>
          <NavRow icon={<Cloud />} label="OneDrive" />
          <NavRow selected icon={<Computer />} label="Ez a gép" />
          <div>
            <NavRow icon={<span className="pt-[6px]"><MiniDrive /></span>} label="BACKUP (E:)" />
            <NestedFolder label="Office 2021" />
          </div>
          <NavRow icon={<MiniNetwork />} label="Hálózat" />
        </aside>

        <main className="flex-1 pl-[10px] pt-[18px]">
          <Section title="Mappák (7)" className="h-[171px]">
            <div className="flex flex-wrap pl-[15px] pt-[9px]">
              {folders.map(([label, badge]) => (
                <Tile key={label} label={label} icon={<Folder>{badge}</Folder>} />
              ))}
            </div>
          </Section>
          <Section title="Eszközök és meghajtók (3)" className="h-[102px]">
            <div className="flex pl-[15px] pt-[8px]">
              <Drive icon={<HardDrive used={18} />} name="Helyi lemez (C:)" info="178 GB szabad, méret: 237 GB" percent={25.7} />
              <Drive icon={<HardDrive used={10} />} name="Letöltések (D:)" info="793 GB szabad, méret: 931 GB" percent={15.5} />
              <Drive icon={<Removable />} name="BACKUP (E:)" info="13,7 GB szabad, méret: 29,7 GB" percent={54} />
            </div>
          </Section>
          <Section title="Hálózati helyek (2)">
            <div className="flex pl-[15px] pt-[8px]">
              <Tile icon={<Camera />} label="ASUS" labelClass="mt-[8px]" />
              <Tile icon={<Serviio />} label="Serviio (Szigetiné)" labelClass="mt-[8px] tracking-[-0.150px]" />
            </div>
          </Section>
        </main>
      </div>

      {/* status bar */}
      <div className="flex h-[30px] shrink-0 items-center pl-[17px] pr-[10px] text-[#2a3f55]">
        <span>12 elem</span>
        <svg width="19" height="16" viewBox="0 0 19 16" className="ml-auto" fill="none">
          <path d="M.5 .5 H5.500 V15.500 H.5 Z M.5 5.500 H5.500 M.5 10.500 H5.500" stroke="#9b9b9b" />
          <path d="M2 3 H4 M2 8 H4 M2 13 H4" stroke="#333" strokeWidth="1.600" />
          <path d="M7.500 3 H18 M7.500 8 H18 M7.500 13 H18" stroke="#666" strokeDasharray="4.500 1.500" />
        </svg>
        <span className="ml-[9px]"><MiniPicture /></span>
      </div>

      <Taskbar />
      <Markers />
    </div>
  );
}
